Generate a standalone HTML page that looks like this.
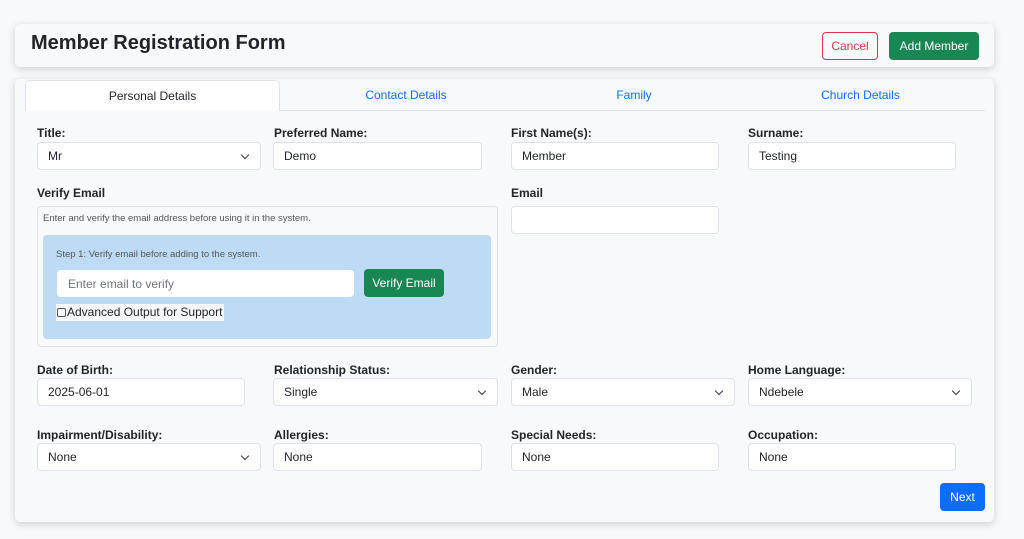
<!DOCTYPE html>
<html><head><style>
*{box-sizing:border-box;margin:0;padding:0}
body{width:1024px;height:539px;background:#f8f9fa;font-family:"Liberation Sans",sans-serif;color:#212529;position:relative;overflow:hidden;font-size:12px}
.a{position:absolute}
.card{background:#f8f9fa;border-radius:5px;box-shadow:0 2px 8px rgba(0,0,0,.18)}
.lbl{position:absolute;font-weight:bold;font-size:12px;color:#212529}
.in{position:absolute;background:#fff;border:1px solid #dee2e6;border-radius:4px;height:28px;padding-left:10px;line-height:26px;font-size:12px;color:#212529}
.sel::after{content:"";position:absolute;right:12px;top:9px;width:5px;height:5px;border-right:1.3px solid #343a40;border-bottom:1.3px solid #343a40;transform:rotate(45deg)}
.tab{position:absolute;top:80px;height:31px;line-height:31px;text-align:center;color:#0d6efd;font-size:12px}
.btn{position:absolute;border-radius:4px;text-align:center;font-size:12px}
</style></head><body>
<div class="a card" style="left:15px;top:24px;width:979px;height:43px"></div>
<div class="a" style="left:31px;top:32px;font-size:20px;font-weight:bold;color:#212529">Member Registration Form</div>
<div class="btn" style="left:822px;top:32px;width:56px;height:28px;line-height:26px;border:1px solid #dc3545;color:#dc3545">Cancel</div>
<div class="btn" style="left:889px;top:32px;width:90px;height:28px;line-height:28px;background:#198754;color:#fff">Add Member</div>

<div class="a card" style="left:15px;top:79px;width:979px;height:443px"></div>
<div class="a" style="left:25px;top:110px;width:960px;height:1px;background:#dee2e6"></div>
<div class="tab" style="left:25px;width:255px;background:#fff;border:1px solid #dee2e6;border-bottom:none;border-radius:5px 5px 0 0;color:#212529">Personal Details</div>
<div class="tab" style="left:280px;width:252px">Contact Details</div>
<div class="tab" style="left:533px;width:202px">Family</div>
<div class="tab" style="left:735px;width:251px">Church Details</div>

<div class="lbl" style="left:37px;top:126px">Title:</div>
<div class="in sel" style="left:37px;top:142px;width:224px">Mr</div>
<div class="lbl" style="left:274px;top:126px">Preferred Name:</div>
<div class="in" style="left:273px;top:142px;width:209px">Demo</div>
<div class="lbl" style="left:511px;top:126px">First Name(s):</div>
<div class="in" style="left:511px;top:142px;width:208px">Member</div>
<div class="lbl" style="left:748px;top:126px">Surname:</div>
<div class="in" style="left:748px;top:142px;width:208px">Testing</div>

<div class="lbl" style="left:37px;top:186px">Verify Email</div>
<div class="a" style="left:37px;top:206px;width:461px;height:141px;border:1px solid #dee2e6;border-radius:4px"></div>
<div class="a" style="left:43px;top:213px;font-size:9.5px;color:#555">Enter and verify the email address before using it in the system.</div>
<div class="a" style="left:43px;top:235px;width:448px;height:104px;background:#bddbf4;border-radius:4px"></div>
<div class="a" style="left:56px;top:249px;font-size:9.5px;color:#555">Step 1: Verify email before adding to the system.</div>
<div class="in" style="left:57px;top:270px;width:297px;height:27px;color:#6c757d;border-color:#fff">Enter email to verify</div>
<div class="btn" style="left:364px;top:269px;width:80px;height:28px;line-height:28px;background:#198754;color:#fff">Verify Email</div>
<div class="a" style="left:56px;top:304px;width:168px;height:17px;background:#f5f7fa;font-size:12px;line-height:17px;padding-left:11px">Advanced Output for Support</div>
<div class="a" style="left:57px;top:308px;width:9px;height:9px;border:1px solid #555;border-radius:2px;background:#fff"></div>

<div class="lbl" style="left:511px;top:186px">Email</div>
<div class="in" style="left:511px;top:206px;width:208px"></div>

<div class="lbl" style="left:37px;top:363px">Date of Birth:</div>
<div class="in" style="left:37px;top:378px;width:208px">2025-06-01</div>
<div class="lbl" style="left:274px;top:363px">Relationship Status:</div>
<div class="in sel" style="left:273px;top:378px;width:225px">Single</div>
<div class="lbl" style="left:511px;top:363px">Gender:</div>
<div class="in sel" style="left:511px;top:378px;width:224px">Male</div>
<div class="lbl" style="left:748px;top:363px">Home Language:</div>
<div class="in sel" style="left:748px;top:378px;width:224px">Ndebele</div>

<div class="lbl" style="left:37px;top:428px">Impairment/Disability:</div>
<div class="in sel" style="left:37px;top:443px;width:224px">None</div>
<div class="lbl" style="left:274px;top:428px">Allergies:</div>
<div class="in" style="left:273px;top:443px;width:209px">None</div>
<div class="lbl" style="left:511px;top:428px">Special Needs:</div>
<div class="in" style="left:511px;top:443px;width:208px">None</div>
<div class="lbl" style="left:748px;top:428px">Occupation:</div>
<div class="in" style="left:748px;top:443px;width:208px">None</div>

<div class="btn" style="left:940px;top:483px;width:45px;height:28px;line-height:28px;background:#0d6efd;color:#fff">Next</div>
</body></html>
